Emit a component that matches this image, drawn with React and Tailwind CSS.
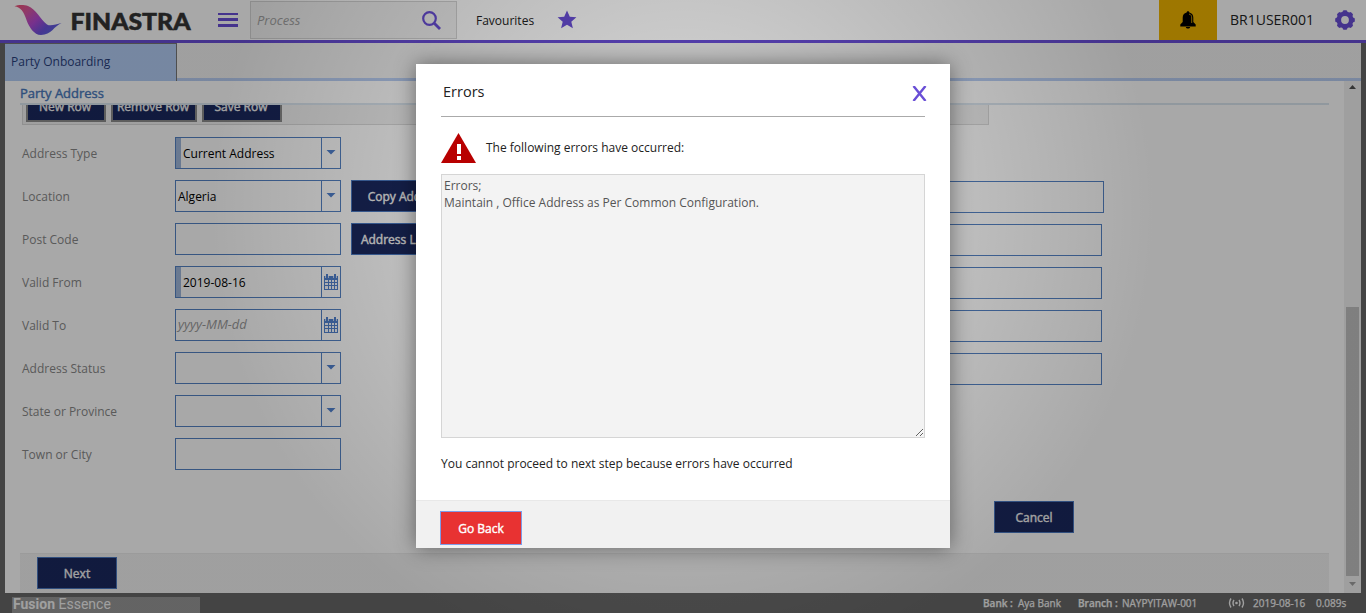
import React from "react";

const ROWS = [
  { label: "Address Type", value: "Current Address", kind: "select", required: true },
  { label: "Location", value: "Algeria", kind: "select", action: "Copy Address" },
  { label: "Post Code", value: "", kind: "text", action: "Address Lookup" },
  { label: "Valid From", value: "2019-08-16", kind: "date", required: true },
  { label: "Valid To", placeholder: "yyyy-MM-dd", kind: "date" },
  { label: "Address Status", value: "", kind: "select" },
  { label: "State or Province", value: "", kind: "select" },
  { label: "Town or City", value: "", kind: "text" },
];

const ADDRESS_LINES = ["w-[304px]", "w-[302px]", "w-[302px]", "w-[302px]", "w-[302px]"];

function Logo() {
  return (
    <svg width="182" height="40" viewBox="0 0 182 40" className="block shrink-0">
      <defs>
        <linearGradient id="wing" x1="0" y1="0" x2="1" y2="0.7">
          <stop offset="0" stopColor="#f0506e" />
          <stop offset="0.28" stopColor="#d957a0" />
          <stop offset="0.55" stopColor="#b44ad6" />
          <stop offset="0.8" stopColor="#6a52dc" />
          <stop offset="1" stopColor="#5b62e0" />
        </linearGradient>
      </defs>
      <path
        d="M4.500 6.200 C8 4.700 14 4.600 18 6 C26 9 30 19 37 24.500 C40 26.500 46 24.500 51.500 23 C44 26 41.500 35 31 35 C24 35 19 27 16.500 20 C14 12 11 7.200 4.500 6.200 Z"
        fill="url(#wing)"
      />
      <text x="60.500" y="29.500" fontFamily="Lato" fontWeight="900" fontSize="22.500" textLength="120" lengthAdjust="spacingAndGlyphs" fill="#333" stroke="#333" strokeWidth="0.500">
        FINASTRA
      </text>
    </svg>
  );
}

function Gear() {
  return (
    <svg width="20" height="20" viewBox="-10 -10 20 20" className="block" fill="#694ed6">
      {[0, 45, 90, 135, 180, 225, 270, 315].map((a) => (
        <rect key={a} x="-2.300" y="-9.800" width="4.600" height="5" rx="1.400" transform={`rotate(${a})`} />
      ))}
      <circle r="6.200" fill="none" stroke="#694ed6" strokeWidth="4.600" />
    </svg>
  );
}

function Bell() {
  return (
    <svg width="16" height="18" viewBox="0 0 16 18" className="block">
      <path d="M8 0.300 C7 0.300 6.700 1 6.700 1.500 C4 2 2.700 4 2.700 6.500 V11 L0.300 13.600 V15.400 H15.700 V13.600 L13.300 11 V6.500 C13.300 4 12 2 9.300 1.500 C9.300 1 9 0.300 8 0.300 Z M5.800 16 H10.200 C10 17 9 17.600 8 17.600 C7 17.600 6 17 5.800 16 Z" fill="#000" />
      <path d="M9 3 C11.200 3.600 11.700 5 11.700 7 V12" fill="none" stroke="#f0b400" strokeWidth="0.800" />
    </svg>
  );
}

function Calendar() {
  return (
    <svg width="14" height="16" viewBox="0 0 14 16" className="block" shapeRendering="crispEdges">
      <path d="M0 2 H14 V16 H0 Z" fill="#5080cc" />
      <path d="M2 0 H4 V4 H2 Z M10 0 H12 V4 H10 Z" fill="#5080cc" />
      <path d="M1 2 H2 V4 H1 Z M4 2 H5 V4 H4 Z M9 2 H10 V4 H9 Z M12 2 H13 V4 H12 Z" fill="#c5d4ec" />
      <path d="M1 6 H4 V8 H1 Z M5 6 H7 V8 H5 Z M8 6 H10 V8 H8 Z M11 6 H13 V8 H11 Z M1 9 H4 V11 H1 Z M5 9 H7 V11 H5 Z M8 9 H10 V11 H8 Z M11 9 H13 V11 H11 Z M1 12 H4 V15 H1 Z M5 12 H7 V15 H5 Z M8 12 H10 V15 H8 Z M11 12 H13 V15 H11 Z" fill="#f4f7fc" />
    </svg>
  );
}

function Field({ kind, value, placeholder, required }) {
  return (
    <div className="flex h-8 w-[166px] shrink-0 border border-[#5482c4]">
      {required && <div className="w-[5px] bg-[#a0b8dc]" />}
      <div className={`flex flex-1 items-center pl-[2px] ${placeholder ? "pb-px text-[13px] italic text-[#999]" : "pt-px text-[12px] text-black"}`}>
        {value || placeholder}
      </div>
      {kind !== "text" && (
        <div className="flex w-[19px] items-center justify-center border-l border-[#5482c4]">
          {kind === "date" ? (
            <Calendar />
          ) : (
            <svg width="10" height="5" viewBox="0 0 10 5" className="mb-px block" fill="#5080cc">
              <path d="M0.500 0 H9.500 L5 4.500 Z" />
            </svg>
          )}
        </div>
      )}
    </div>
  );
}

function NavyButton({ children, className = "" }) {
  return (
    <button className={`h-8 shrink-0 whitespace-nowrap border border-[#4a78c0] bg-[#1a285e] pt-px text-[12px] text-[#f4f4f4] [-webkit-text-stroke:0.4px_#f4f4f4] ${className}`}>
      {children}
    </button>
  );
}

function Header() {
  return (
    <header className="flex h-[43px] shrink-0 border-b-3 border-[#694ed6] bg-white">
      <div className="w-[10px]" />
      <Logo />
      <div className="ml-[26px] flex w-5 flex-col justify-center gap-[3px]">
        <div className="h-[2px] bg-[#694ed6]" />
        <div className="h-[3px] bg-[#694ed6]" />
        <div className="h-[3px] bg-[#694ed6]" />
      </div>
      <div className="ml-3 mt-px flex h-[38px] w-[207px] items-center justify-between border border-[#d4d4d4] bg-[#f3f3f3] pl-[6px] pr-[15px]">
        <span className="pt-px text-[13px] italic text-[#a2a2a2]">Process</span>
        <svg width="19" height="19" viewBox="0 0 19 19" className="block" fill="none" stroke="#694ed6">
          <circle cx="7.500" cy="7.500" r="6.300" strokeWidth="2.200" />
          <path d="M12 12 L18 18" strokeWidth="2.800" />
        </svg>
      </div>
      <div className="ml-[19px] flex w-[59px] items-center pt-px text-[12px] text-[#222]">Favourites</div>
      <svg width="20" height="20" viewBox="0 0 20 20" className="ml-[22px] mt-[10px] block" fill="#694ed6">
        <path d="M10 0.500 L12.800 6.800 L19.400 7.300 L14.300 11.700 L15.900 18.300 L10 14.700 L4.100 18.300 L5.700 11.700 L0.600 7.300 L7.200 6.800 Z" />
      </svg>
      <div className="flex-1" />
      <div className="flex w-[58px] items-center justify-center bg-[#f0b400]">
        <Bell />
      </div>
      <div className="flex w-[118px] items-center pb-[2px] pl-[13px] text-[14px] text-[#222]">BR1USER001</div>
      <div className="flex w-[31px] items-center">
        <Gear />
      </div>
    </header>
  );
}

function AddressPanel() {
  return (
    <div className="w-[1339px] pl-[15px] pt-[4px]">
      <h2 className="h-[18px] text-[13px] leading-[17px] text-[#4878bc] [-webkit-text-stroke:0.4px_#4878bc]">Party Address</h2>
      <div className="w-[1309px] border-t-2 border-[#dbe6f0]">
        <div className="ml-[2px] flex h-5 w-[967px] items-start overflow-hidden border-x border-b border-[#dadada] bg-[#f2f2f2] pl-[3px]">
          {[
            ["New Row", "w-[80px]"],
            ["Remove Row", "w-[86px] ml-[5px]"],
            ["Save Row", "w-[80px] ml-[5px]"],
          ].map(([name, cls]) => (
            <div key={name} className={`-mt-[15px] flex h-8 items-center justify-center border-2 border-[#8d8d8d] bg-[#1a285e] pr-[2px] pt-[2px] text-[12px] text-[#f4f4f4] [-webkit-text-stroke:0.4px_#f4f4f4] ${cls}`}>
              {name}
            </div>
          ))}
        </div>
      </div>
      <div className="mt-3 flex">
        <div className="flex w-[780px] flex-col gap-[11px] pl-[2px]">
          {ROWS.map((row) => (
            <div key={row.label} className="flex h-8 items-center">
              <div className="w-[153px] pt-px text-[12px] text-[#888]">{row.label}</div>
              <Field {...row} />
              {row.action && <NavyButton className="ml-[10px] w-[110px]">{row.action}</NavyButton>}
            </div>
          ))}
        </div>
        <div className="flex flex-col gap-[11px] pt-11">
          {ADDRESS_LINES.map((w, i) => (
            <div key={i} className={`h-8 border border-[#5482c4] ${w}`} />
          ))}
        </div>
      </div>
      <div className="mt-[31px] flex pl-[974px]">
        <NavyButton className="w-20">Cancel</NavyButton>
      </div>
      <div className="mt-5 flex h-10 w-[1309px] border-t border-[#ebebeb] bg-[#f2f2f2] pl-[17px] pt-[3px]">
        <NavyButton className="w-20">Next</NavyButton>
      </div>
    </div>
  );
}

function Scrollbar() {
  return (
    <div className="flex w-[17px] flex-col items-center bg-[#f1f1f1] pt-[4px]">
      <svg width="7" height="4" viewBox="0 0 7 4" className="block" fill="#505050">
        <path d="M3.500 0 L7 4 H0 Z" />
      </svg>
      <div className="mt-[218px] h-[269px] w-[13px] bg-[#c1c1c1]" />
      <svg width="7" height="4" viewBox="0 0 7 4" className="mt-[6px] block" fill="#a0a0a0">
        <path d="M0 0 H7 L3.500 4 Z" />
      </svg>
    </div>
  );
}

function StatusBar() {
  return (
    <footer className="flex h-5 shrink-0 items-center bg-[#676767] text-[10px] text-[#f2f2f2]">
      <div className="ml-3 mt-1 flex h-4 w-[188px] items-center whitespace-pre bg-[#979797] pb-[2px] pl-px font-[Roboto] text-[14px]">
        <b>Fusion</b> Essence
      </div>
      <div className="flex-1" />
      <div className="flex items-center [-webkit-text-stroke:0.25px_#f2f2f2]">
        <span className="w-[35px] font-semibold">Bank :</span>
        <span className="w-[60px]">Aya Bank</span>
        <span className="w-[44px] font-semibold">Branch :</span>
        <span className="w-[106px]">NAYPYITAW-001</span>
        <svg width="17" height="10" viewBox="0 0 17 10" className="mr-[8px] block" fill="none" stroke="#f2f2f2" strokeWidth="1.400">
          <path d="M3 0.500 Q0 5 3 9.500 M6 2 Q4 5 6 8 M11 2 Q13 5 11 8 M14 0.500 Q17 5 14 9.500" />
          <circle cx="8.500" cy="5" r="1.300" fill="#f2f2f2" stroke="none" />
        </svg>
        <span className="w-[63px]">2019-08-16</span>
        <span className="w-[50px]">0.089s</span>
      </div>
    </footer>
  );
}

function ErrorDialog() {
  return (
    <div className="absolute left-[416px] top-[64px] flex h-[484px] w-[534px] flex-col bg-white shadow-[0_0_20px_rgba(0,0,0,0.45)]">
      <div className="mx-[25px] flex h-[53px] items-center justify-between border-b border-[#aaa]">
        <h1 className="pl-[2px] pt-[4px] text-[14.5px] text-[#222]">Errors</h1>
        <svg width="16" height="15" viewBox="0 0 16 15" className="-mr-[3px] mt-[6px] block" stroke="#694ed6" strokeWidth="2.400">
          <path d="M1.500 0 L13.500 15 M13.500 0 L1.500 15" />
        </svg>
      </div>
      <div className="mx-[25px] mt-4 flex h-[30px]">
        <svg width="35" height="30" viewBox="0 0 35 30" className="block">
          <path d="M17.500 0 L35 30 H0 Z" fill="#b80000" />
          <path d="M16 11 H20 V21 H16 Z M16 23 H20 V27 H16 Z" fill="#fff" />
        </svg>
        <p className="pl-[10px] pt-[6px] text-[12px] leading-[18px] text-[#222]">The following errors have occurred:</p>
      </div>
      <textarea
        readOnly
        defaultValue={"Errors;\nMaintain , Office Address as Per Common Configuration."}
        className="mx-[25px] mt-[11px] block h-[264px] w-[484px] shrink-0 resize border border-[#d5d5d5] bg-[#f3f3f3] p-[2px] text-[12px] leading-[17px] text-[#555] outline-none"
      />
      <p className="mx-[25px] mt-[17px] text-[12px] leading-[18px] text-[#222]">You cannot proceed to next step because errors have occurred</p>
      <div className="mt-auto h-12 border-t border-[#e8e8e8] bg-[#f1f1f1] pl-[25px] pt-[11px]">
        <button className="h-8 w-20 bg-[#e83232] pt-px text-[12px] text-white outline outline-[#7f9ce8] [-webkit-text-stroke:0.4px_#fff]">Go Back</button>
      </div>
    </div>
  );
}

export default function App() {
  return (
    <div className="relative flex h-[613px] w-[1366px] flex-col overflow-hidden bg-[#676767] font-['Open_Sans',sans-serif]">
      <Header />
      <div className="mx-[5px] flex h-[38px] shrink-0 border-b-3 border-[#b8cdf2] bg-[#f2f2f2]">
        <div className="-mb-[3px] flex w-[172px] items-center border-r border-t border-[#777] bg-[#b3cdf5] pb-px pl-[6px] text-[12px] text-[#28407c]">
          Party Onboarding
        </div>
      </div>
      <main className="mx-[5px] flex h-[512px] shrink-0 overflow-hidden bg-white">
        <AddressPanel />
        <Scrollbar />
      </main>
      <StatusBar />
      <div className="absolute inset-0 bg-[radial-gradient(circle_480px_at_683px_210px,rgba(0,0,0,0.16)_0px,rgba(0,0,0,0.2)_150px,rgba(0,0,0,0.34)_470px)]" />
      <ErrorDialog />
    </div>
  );
}
